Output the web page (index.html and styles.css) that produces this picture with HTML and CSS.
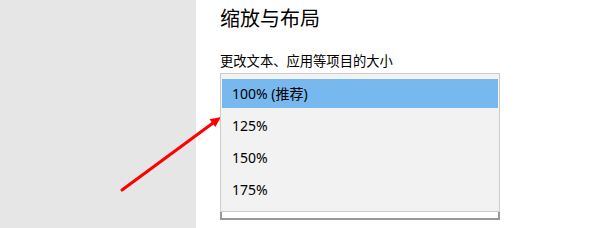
FILE: index.html
```html
<!DOCTYPE html>
<html lang="zh-CN">
<head>
    <meta charset="UTF-8">
    <title>缩放与布局</title>
    <link rel="stylesheet" href="styles.css">
</head>
<body>
    <div class="page">
        <div class="sidebar"></div>
        <div class="main">
            <h1 class="title">缩放与布局</h1>
            <div class="label">更改文本、应用等项目的大小</div>
            <div class="combo">
                <div class="combo-box"></div>
                <ul class="popup">
                    <li class="item selected">100% (推荐)</li>
                    <li class="item">125%</li>
                    <li class="item">150%</li>
                    <li class="item">175%</li>
                </ul>
            </div>
        </div>
    </div>
    <svg class="arrow" width="600" height="228" viewBox="0 0 600 228">
        <line x1="122" y1="190" x2="213" y2="123" stroke="#ff0000" stroke-width="3" stroke-linecap="round"/>
        <polygon points="221,117 215.3,127 209.6,119.3" fill="#ff0000"/>
    </svg>
</body>
</html>
```

FILE: styles.css
```css
body { margin: 0; font-family: "Noto Sans", "Noto Sans CJK SC", sans-serif; color: #000; background: #fff; }
.page { display: flex; height: 228px; overflow: hidden; }
.sidebar { width: 196px; background: #e6e6e6; flex-shrink: 0; }
.main { padding-left: 24px; }

.title { margin: 0; padding-top: 5px; font-size: 20px; font-weight: normal; line-height: 28px; }
.label { margin-top: 18px; font-size: 13.3px; line-height: 20px; }

.combo { position: relative; width: 280px; margin-top: 2px; padding-bottom: 8px; }
.combo-box {
    position: absolute;
    left: 0;
    right: 0;
    bottom: 0;
    height: 32px;
    box-sizing: border-box;
    border: 2px solid #999;
    background: #fff;
}
.popup {
    position: relative;
    z-index: 1;
    list-style: none;
    margin: 0;
    padding: 5px 1px 7px;
    display: flex;
    flex-direction: column;
    gap: 3px;
    border: 1px solid #cccccc;
    background: #f2f2f2;
}
.item { height: 29px; line-height: 29px; padding-left: 10px; font-size: 14px; }
.item.selected { background: #77b9ee; }

.arrow { position: absolute; left: 0; top: 0; pointer-events: none; }
```
